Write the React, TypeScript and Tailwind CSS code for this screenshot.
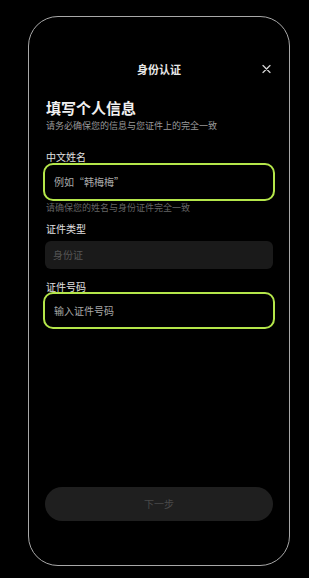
import React from "react";

export default function App() {
  return (
    <div
      className="w-[309px] h-[578px] bg-black overflow-hidden"
      style={{ fontFamily: '"Noto Sans CJK SC", "Noto Sans", sans-serif' }}
    >
      <div className="ml-[28px] mt-[16px] w-[262px] h-[550px] rounded-[30px] border border-[#a8a8a8] flex flex-col px-[14px] pb-[44px]">
        <div className="mt-[42px] h-[20px] relative flex items-center justify-center">
          <span className="text-[11px] font-bold text-[#e8e8e8] leading-none">身份认证</span>
          <svg
            className="absolute right-[4px] top-1/2 -translate-y-1/2"
            width="9"
            height="9"
            viewBox="0 0 9 9"
          >
            <path d="M1 1L8 8M8 1L1 8" stroke="#d0d0d0" strokeWidth="1.3" strokeLinecap="round" />
          </svg>
        </div>
        <div className="mt-[17px] h-[22px] pl-[3px] flex items-center text-[15px] font-bold text-[#f0f0f0] leading-none">
          填写个人信息
        </div>
        <div className="h-[14px] pl-[3px] flex items-center text-[9px] text-[#9a9a9a] leading-none">
          请务必确保您的信息与您证件上的完全一致
        </div>
        <div className="mt-[19px] h-[12px] pl-[3px] flex items-center text-[10px] text-[#e0e0e0] leading-none">
          中文姓名
        </div>
        <div className="h-[38px] rounded-[10px] border-2 border-[#b4e64a] flex items-center pl-[9px] text-[10px] text-[#a8a8a8] leading-none">
          例如“韩梅梅”
        </div>
        <div className="h-[12px] pl-[3px] flex items-center text-[9px] text-[#666] leading-none">
          请确保您的姓名与身份证件完全一致
        </div>
        <div className="mt-[10px] h-[12px] pl-[3px] flex items-center text-[10px] text-[#e0e0e0] leading-none">
          证件类型
        </div>
        <div className="mt-[6px] mx-[2px] h-[28px] rounded-[6px] bg-[#1a1a1a] flex items-center pl-[8px] text-[10px] text-[#555] leading-none">
          身份证
        </div>
        <div className="mt-[12px] h-[11px] pl-[3px] flex items-center text-[10px] text-[#e0e0e0] leading-none">
          证件号码
        </div>
        <div className="h-[37px] rounded-[10px] border-2 border-[#b4e64a] flex items-center pl-[9px] text-[10px] text-[#a8a8a8] leading-none">
          输入证件号码
        </div>
        <div className="mt-auto mx-[2px] h-[34px] rounded-full bg-[#1f1f1f] flex items-center justify-center text-[10px] text-[#4a4a4a] leading-none">
          下一步
        </div>
      </div>
    </div>
  );
}
